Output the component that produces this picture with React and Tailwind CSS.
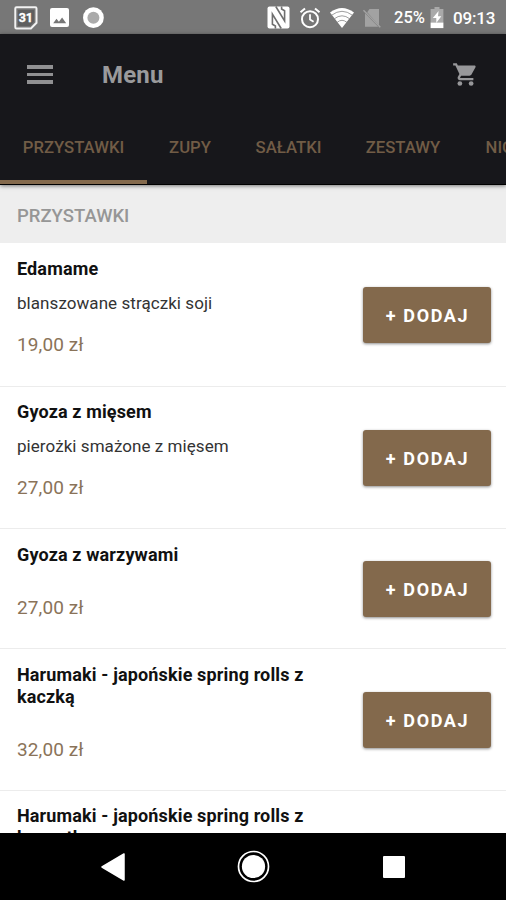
import React from "react";

const tabs = [
  { label: "PRZYSTAWKI", box: "w-[147px]" },
  { label: "ZUPY", box: "w-[86px]" },
  { label: "SAŁATKI", box: "w-[111px]" },
  { label: "ZESTAWY", box: "w-[118px]" },
  { label: "NIGIRI", box: "w-[95px]" },
];

const dishes = [
  { name: "Edamame", info: "blanszowane strączki soji", price: "19,00 zł", height: "h-[144px]", top: "pt-[15px]" },
  { name: "Gyoza z mięsem", info: "pierożki smażone z mięsem", price: "27,00 zł", height: "h-[142px]", top: "pt-[14px]" },
  { name: "Gyoza z warzywami", info: "", price: "27,00 zł", height: "h-[120px]", top: "pt-[15px]" },
  { name: "Harumaki - japońskie spring rolls z kaczką", info: "", price: "32,00 zł", height: "h-[142px]", top: "pt-[15px]" },
  { name: "Harumaki - japońskie spring rolls z krewetką", info: "", price: "", height: "h-[142px]", top: "pt-[14px]" },
];

function StatusBar() {
  return (
    <div className="flex h-[34px] shrink-0 items-center bg-[#777777] pl-[14px] pr-[10px] pt-px text-white">
      <svg className="h-[24px] w-[24px]" viewBox="0 0 24 24">
        <path d="M2.5 1.2h18.8q1.2 0 1.2 1.2v14.4l-5.6 5.7H2.5q-1.2 0-1.2-1.2V2.4q0-1.2 1.2-1.2z" fill="#747474" stroke="#f2f2f2" strokeWidth="2" />
        <path d="M4 4h16v11.8L16 20H4z" fill="#5f5f5f" />
        <text x="11.8" y="16.2" textAnchor="middle" fontFamily="Roboto, sans-serif" fontWeight="700" fontSize="12.5" fill="#fff" stroke="#fff" strokeWidth="0.3">31</text>
      </svg>
      <svg className="ml-[12px] h-[19px] w-[19px]" viewBox="0 0 19 19">
        <rect width="19" height="19" rx="2" fill="#fff" />
        <path d="M3.2 15.2l3.3-4.4 2.4 2.9 3.2-4.1 4.1 5.6z" fill="#777" />
      </svg>
      <svg className="ml-[13px] h-[22px] w-[22px]" viewBox="0 0 22 22">
        <circle cx="11.4" cy="10.7" r="10.4" fill="#fff" />
        <circle cx="11.4" cy="10.7" r="6" fill="#aaa" />
      </svg>
      <div className="flex-1" />
      <svg className="h-[23px] w-[23px]" viewBox="0 0 23 23">
        <path d="M2.8.5H20.5q2 0 2 2v18q0 2-2 2H2.5q-2 0-2-2v-18q0-2 2-2z" fill="#fff" />
        <path d="M8.8.5L17.6 14.8V4.8L14.6 3V.5M14.2 22.5L5.4 8.2v10L8.4 20v2.5" fill="none" stroke="#6f6f6f" strokeWidth="1.6" />
      </svg>
      <svg className="ml-[9px] mr-px h-[22px] w-[22px]" viewBox="0 0 22 22" fill="none" stroke="#fff" strokeWidth="2">
        <circle cx="11" cy="12.2" r="8" />
        <path d="M11 7.2v5.3l3.6 2.2" strokeWidth="1.8" />
        <path d="M1.5 5.2L6 1.4M20.5 5.2L16 1.4" />
      </svg>
      <svg className="ml-[8px] h-[20px] w-[24px]" viewBox="0 0 24 20">
        <path d="M0 4.5Q12-4.5 24 4.5L12 20z" fill="#fff" />
        <path d="M1.5 7.3Q12-.7 22.5 7.3M4.3 10.8Q12 4.8 19.7 10.8M7.2 14.3Q12 10.3 16.8 14.3" fill="none" stroke="#858585" strokeWidth="0.8" />
      </svg>
      <svg className="ml-[8px] h-[20px] w-[20px]" viewBox="0 0 20 20">
        <path d="M7.5 1H17v16.5L5.2 4.2zM3 5.2l13.2 13.6H3z" fill="#a2a2a2" />
        <path d="M1.5 2.2l16.8 17" stroke="#a2a2a2" strokeWidth="1.5" />
      </svg>
      <span className="ml-[12px] w-[33px] whitespace-nowrap pt-[2px] text-[16.5px] font-medium leading-none">25%</span>
      <svg className="ml-[3px] h-[22px] w-[14px]" viewBox="0 0 14 22">
        <path d="M4.5 0h5v2H13.4v13.5H.6V2h3.9z" fill="#a9a9a9" />
        <path d="M.6 15.5h12.8v5.6H.6z" fill="#fff" />
        <path d="M8.6 4L2.8 11h3.5v5l5-6.7H8z" fill="#fff" />
      </svg>
      <span className="ml-[9px] w-[43px] whitespace-nowrap pt-[1px] text-[17px] font-medium leading-none tracking-[-0.2px]">09:13</span>
    </div>
  );
}

function AppBar() {
  return (
    <header className="relative z-10 flex h-[151px] shrink-0 flex-col bg-[#17171b] shadow-[0_1px_4px_rgba(0,0,0,0.5)]">
      <div className="flex h-[81px] items-center pl-[27px] pr-[27px]">
        <div className="flex w-[26px] flex-col gap-[4px]">
          <span className="h-[3.5px] bg-[#909092]" />
          <span className="h-[3.5px] bg-[#909092]" />
          <span className="h-[3.5px] bg-[#909092]" />
        </div>
        <h1 className="ml-[49px] pt-[1px] text-[24px] font-bold leading-none tracking-[0.2px] text-[#9a9a9c]">Menu</h1>
        <svg className="ml-auto h-[27px] w-[27px]" viewBox="0 0 24 24" fill="#97979a">
          <path d="M1 2v2h2l3.6 7.59-1.35 2.45c-.16.28-.25.61-.25.96 0 1.1.9 2 2 2h12v-2H7.42c-.14 0-.25-.11-.25-.25l.03-.12.9-1.63h7.45c.75 0 1.41-.41 1.75-1.03l3.58-6.49c.08-.14.12-.31.12-.48 0-.55-.45-1-1-1H5.21l-.94-2H1z" />
          <circle cx="7" cy="20" r="2.1" />
          <circle cx="17" cy="20" r="2.1" />
        </svg>
      </div>
      <nav className="flex flex-1 overflow-hidden border-b border-black">
        {tabs.map((tab, i) => (
          <div key={tab.label} className={`flex shrink-0 flex-col ${tab.box}`}>
            <span className="flex flex-1 items-center justify-center pt-[1px] text-[16.7px] font-medium leading-none text-[#715c46]">{tab.label}</span>
            <span className={i === 0 ? "-mb-px h-[5px] bg-[#846a4d]" : "h-[4px]"} />
          </div>
        ))}
      </nav>
    </header>
  );
}

function Dish({ dish }) {
  return (
    <li className={`flex shrink-0 items-center border-b border-[#ececec] pl-[17px] pr-[15px] ${dish.height}`}>
      <div className={`flex h-full w-[310px] flex-col ${dish.top}`}>
        <h3 className="text-[18px] font-bold leading-[22px] tracking-[0.14px] text-[#111]">{dish.name}</h3>
        {dish.info ? (
          <p className="mt-[13px] text-[17px] leading-[20px] tracking-[0.06px] text-[#333]">{dish.info}</p>
        ) : (
          <div className="h-[10px]" />
        )}
        <p className="mt-[21px] text-[19px] leading-[22px] tracking-[0.1px] text-[#8a7359]">{dish.price}</p>
      </div>
      <button className="ml-auto flex h-[56px] w-[128px] items-center justify-center rounded-[3px] bg-[#83694c] pl-[1px] pt-[2px] text-[18px] font-bold tracking-[1.6px] text-white shadow-[0_1px_3px_rgba(0,0,0,0.45)]">
        + DODAJ
      </button>
    </li>
  );
}

function SystemNav() {
  return (
    <div className="flex h-[67px] shrink-0 items-center bg-black pl-[100px] pr-[101px]">
      <svg className="h-[30px] w-[25px]" viewBox="0 0 25 30">
        <path d="M24 2v26L2 15z" fill="#fff" stroke="#fff" strokeWidth="1.5" strokeLinejoin="round" />
      </svg>
      <svg className="ml-[112px] h-[33px] w-[33px]" viewBox="0 0 33 33">
        <circle cx="16.5" cy="16.5" r="15" fill="none" stroke="#fff" strokeWidth="1.7" />
        <circle cx="16.5" cy="16.5" r="11.6" fill="#fff" />
      </svg>
      <span className="ml-auto h-[22px] w-[22px] rounded-[1px] bg-white" />
    </div>
  );
}

export default function App() {
  return (
    <div className="flex h-[900px] w-[506px] flex-col overflow-hidden bg-white font-[Roboto,sans-serif]">
      <StatusBar />
      <AppBar />
      <main className="flex min-h-0 flex-1 flex-col overflow-hidden bg-white">
        <h2 className="flex h-[58px] shrink-0 items-center bg-[#eeeeee] pl-[17px] pt-[5px] text-[18.5px] font-medium text-[#969696]">PRZYSTAWKI</h2>
        <ul className="flex flex-col">
          {dishes.map((dish) => (
            <Dish key={dish.name} dish={dish} />
          ))}
        </ul>
      </main>
      <SystemNav />
    </div>
  );
}
